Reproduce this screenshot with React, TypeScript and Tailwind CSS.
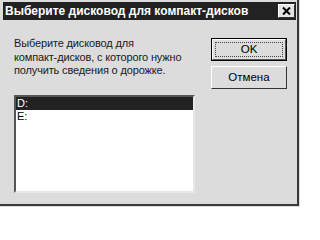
export default function App() {
  return (
    <div className="w-[300px] h-[207px] bg-[#dcdcdc] overflow-hidden font-['Liberation_Sans',Arial,sans-serif]">
      <div className="w-[299px] h-[206px] border-r-2 border-b-2 border-[#3a3a3a] pt-[2px] pl-[3px] pr-[1px] flex flex-col">
        {/* title bar */}
        <div className="h-[18px] bg-[#222] flex items-center justify-between pl-[2px] pr-[1px]">
          <span className="text-white font-bold text-[12px] leading-none whitespace-nowrap">
            Выберите дисковод для компакт-дисков
          </span>
          <button className="w-[17px] h-[14px] bg-[#e4e4e4] border border-t-white border-l-white border-r-[#333] border-b-[#333] flex items-center justify-center">
            <svg width="9" height="8" viewBox="0 0 9 8">
              <path d="M1 0.5 L8 7.5 M8 0.5 L1 7.5" stroke="#000" strokeWidth="2" />
            </svg>
          </button>
        </div>

        {/* body */}
        <div className="flex gap-4 pl-[11px] pt-[17px]">
          <div className="w-[181px] flex flex-col">
            <p className="text-[11px] leading-[13.5px] text-[#1a1a1a] tracking-[-0.15px]">
              Выберите дисковод для
              <br />
              компакт-дисков, с которого нужно
              <br />
              получить сведения о дорожке.
            </p>
            <div className="mt-[17px] h-[98px] bg-white border-2 border-t-[#555] border-l-[#555] border-r-[#e8e8e8] border-b-[#e8e8e8] flex flex-col">
              <div className="h-[13px] bg-[#222] text-white text-[11px] leading-[13px] pl-[1px]">D:</div>
              <div className="h-[13px] text-black text-[11px] leading-[13px] pl-[1px]">E:</div>
            </div>
          </div>

          <div className="w-[76px] flex flex-col gap-[5px] pt-[1px]">
            <button className="h-[23px] border border-black bg-[#dcdcdc] p-0">
              <div className="h-full border border-t-white border-l-white border-r-[#555] border-b-[#555] p-[2px]">
                <div className="h-full border border-dotted border-[#444] flex items-center justify-center text-[11.5px] text-black leading-none">
                  OK
                </div>
              </div>
            </button>
            <button className="h-[23px] border border-t-white border-l-white border-r-[#333] border-b-[#333] bg-[#dcdcdc] flex items-center justify-center text-[11.5px] text-black leading-none">
              Отмена
            </button>
          </div>
        </div>
      </div>
    </div>
  )
}
